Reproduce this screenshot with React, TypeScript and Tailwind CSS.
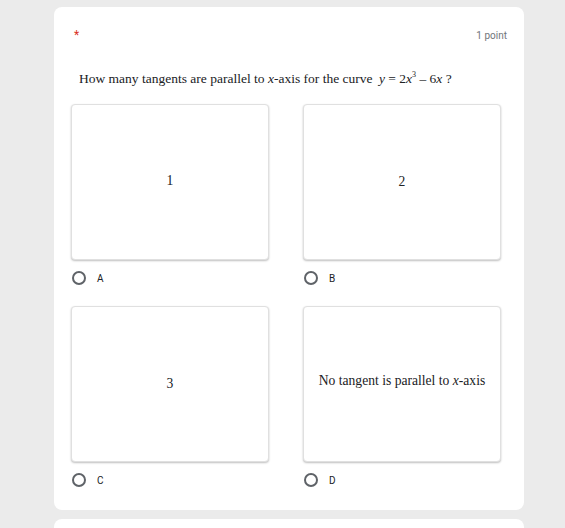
import React from "react";

const serif = { fontFamily: '"Liberation Serif", "Times New Roman", serif' };

function Option({ letter, content }: { letter: string; content: React.ReactNode }) {
  return (
    <div className="flex flex-col">
      <div
        className="w-[198px] h-[156px] bg-white rounded-[4px] border border-[#e0e0e0] shadow-[0_1px_2px_rgba(0,0,0,0.25)] flex items-center justify-center text-[13.6px] text-[#202124]"
        style={serif}
      >
        {content}
      </div>
      <div className="flex items-center h-[36px] pl-[1px]">
        <span className="w-[14px] h-[14px] rounded-full border-2 border-[#5f6368] box-border"></span>
        <span className="ml-[11px] text-[10px] text-[#202124] font-['Roboto',sans-serif]">{letter}</span>
      </div>
    </div>
  );
}

export default function App() {
  return (
    <div className="w-[565px] h-[528px] bg-[#ebebeb] overflow-hidden pt-[7px]">
      <div className="ml-[54px] w-[470px] h-[503px] bg-white rounded-[8px] relative">
        <div className="flex justify-between items-start pt-[22px] pl-[20px] pr-[17px]">
          <span className="text-[#d93025] text-[12px] leading-[12px] font-['Roboto',sans-serif]">*</span>
          <span className="text-[#70757a] text-[10px] leading-[12px] mt-[1px] font-['Roboto',sans-serif]">1 point</span>
        </div>
        <div className="pl-[25px] mt-[29px] text-[13.5px] leading-[16px] text-[#202124]" style={serif}>
          How many tangents are parallel to <i>x</i>-axis for the curve{" "}
          <span className="ml-[3px]">
            <i>y</i> = 2<i>x</i>
            <sup className="text-[8px] top-[-6px]">3</sup> – 6<i>x</i>
          </span>{" "}
          ?
        </div>
        <div className="grid grid-cols-[198px_198px] gap-x-[34px] gap-y-[10px] pl-[17px] mt-[17px]">
          <Option letter="A" content={<span className="mt-[-1px]">1</span>} />
          <Option letter="B" content="2" />
          <Option letter="C" content="3" />
          <Option
            letter="D"
            content={
              <span className="mb-[6px]">
                No tangent is parallel to <i>x</i>-axis
              </span>
            }
          />
        </div>
      </div>
      <div className="ml-[54px] mt-[9px] w-[470px] h-[40px] bg-white rounded-t-[8px]"></div>
    </div>
  );
}
